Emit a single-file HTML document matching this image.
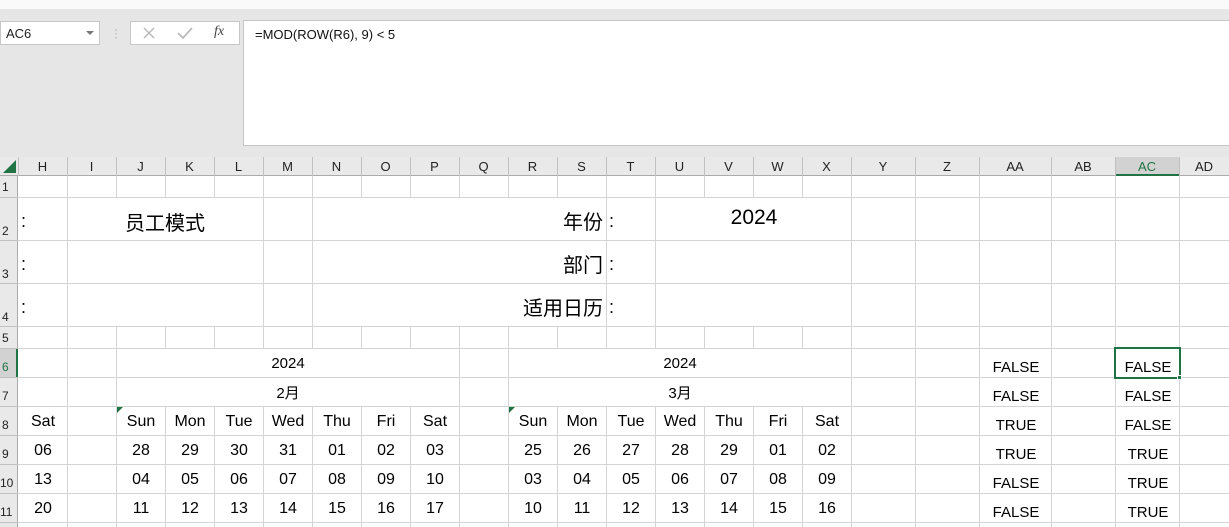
<!DOCTYPE html>
<html><head><meta charset="utf-8"><style>
*{margin:0;padding:0;box-sizing:border-box}
body{width:1229px;height:527px;overflow:hidden;background:#e6e6e6;position:relative;font-family:"Liberation Sans","Noto Sans CJK SC",sans-serif;color:#000}
.a{position:absolute}
.w{position:absolute;background:#fff}
.t{position:absolute;white-space:nowrap;text-align:center;transform:translateX(-50%)}
.ch{position:absolute;top:157px;height:19px;font-size:13px;line-height:19px;text-align:center;color:#222}
.rh{position:absolute;left:0;width:18px;font-size:12px;color:#222;padding-left:2px}
.d{position:absolute;left:0;top:2px;font-size:16px}
</style></head><body>
<div class="a" style="left:0;top:0;width:1229px;height:9px;background:#fafafa"></div>
<div class="w" style="left:0;top:21px;width:100px;height:24px;border:1px solid #c6c6c6"></div>
<div class="a" style="left:6px;top:26px;font-size:13px;color:#222">AC6</div>
<div class="a" style="left:86px;top:31px;width:0;height:0;border-left:4px solid transparent;border-right:4px solid transparent;border-top:4px solid #777"></div>
<div class="a" style="left:114px;top:27px;font-size:12px;color:#aaa;line-height:4px">·<br>·<br>·</div>
<div class="w" style="left:130px;top:21px;width:110px;height:24px;border:1px solid #c6c6c6"></div>
<svg class="a" style="left:130px;top:21px" width="110" height="24">
<path d="M14 7L24 17M24 7L14 17" stroke="#bbb" stroke-width="1.5"/>
<path d="M48 12L53 17L62 7" stroke="#bbb" stroke-width="1.8" fill="none"/>
</svg>
<div class="a" style="left:214px;top:24px;font-size:14px;color:#444;font-style:italic;font-family:'Liberation Serif',serif">fx</div>
<div class="w" style="left:243px;top:20px;width:986px;height:126px;border:1px solid #c6c6c6;border-right:none"></div>
<div class="a" style="left:255px;top:27px;font-size:13px;color:#111">=MOD(ROW(R6), 9) &lt; 5</div>

<div class="w" style="left:0;top:176px;width:1229px;height:351px"></div>
<div class="a" style="left:0;top:157px;width:1229px;height:19px;background:#e9e9e9;border-bottom:1px solid #ababab"></div>
<div class="a" style="left:0;top:176px;width:18px;height:351px;background:#e9e9e9;border-right:1px solid #ababab"></div>
<div class="a" style="left:1115px;top:157px;width:64px;height:19px;background:#d2d2d2;border-bottom:2px solid #217346"></div>
<div class="a" style="left:0;top:348px;width:18px;height:29px;background:#d2d2d2;border-right:2px solid #217346"></div>
<svg class="a" style="left:0;top:157px" width="18" height="19"><path d="M3 16 L16 16 L16 3 Z" fill="#217346"/></svg>

<svg class="a" style="left:0;top:0" width="1229" height="527">
<g stroke="#d4d4d4" stroke-width="1" shape-rendering="crispEdges">
<path d="M67.5 176V527M116.5 176V527M165.5 176V527M214.5 176V527M263.5 176V527M312.5 176V527M361.5 176V527M410.5 176V527M459.5 176V527M508.5 176V527M557.5 176V527M606.5 176V527M655.5 176V527M704.5 176V527M753.5 176V527M802.5 176V527M851.5 176V527M915.5 176V527M979.5 176V527M1051.5 176V527M1115.5 176V527M1179.5 176V527"/>
<path d="M18 197.5H1229M18 240.5H1229M18 283.5H1229M18 326.5H1229M18 348.5H1229M18 377.5H1229M18 406.5H1229M18 435.5H1229M18 464.5H1229M18 493.5H1229M18 522.5H1229"/>
</g>
<g stroke="#c0c0c0" shape-rendering="crispEdges"><path d="M18.5 157V176M67.5 157V176M116.5 157V176M165.5 157V176M214.5 157V176M263.5 157V176M312.5 157V176M361.5 157V176M410.5 157V176M459.5 157V176M508.5 157V176M557.5 157V176M606.5 157V176M655.5 157V176M704.5 157V176M753.5 157V176M802.5 157V176M851.5 157V176M915.5 157V176M979.5 157V176M1051.5 157V176M1115.5 157V176M1179.5 157V176"/>
<path d="M0 197.5H18M0 240.5H18M0 283.5H18M0 326.5H18M0 348.5H18M0 377.5H18M0 406.5H18M0 435.5H18M0 464.5H18M0 493.5H18M0 522.5H18"/></g>
</svg>
<div class="w" style="left:68px;top:198px;width:195px;height:42px"></div>
<div class="w" style="left:68px;top:241px;width:195px;height:42px"></div>
<div class="w" style="left:68px;top:284px;width:195px;height:42px"></div>
<div class="w" style="left:313px;top:198px;width:293px;height:128px"></div>
<div class="a" style="left:312px;top:240px;width:294px;height:1px;background:#d4d4d4"></div>
<div class="a" style="left:312px;top:283px;width:294px;height:1px;background:#d4d4d4"></div>
<div class="w" style="left:656px;top:198px;width:195px;height:42px"></div>
<div class="w" style="left:656px;top:241px;width:195px;height:42px"></div>
<div class="w" style="left:656px;top:284px;width:195px;height:42px"></div>
<div class="w" style="left:117px;top:349px;width:342px;height:28px"></div>
<div class="w" style="left:117px;top:378px;width:342px;height:28px"></div>
<div class="w" style="left:509px;top:349px;width:342px;height:28px"></div>
<div class="w" style="left:509px;top:378px;width:342px;height:28px"></div>

<div class="ch" style="left:18px;width:49px">H</div><div class="ch" style="left:67px;width:49px">I</div><div class="ch" style="left:116px;width:49px">J</div><div class="ch" style="left:165px;width:49px">K</div><div class="ch" style="left:214px;width:49px">L</div><div class="ch" style="left:263px;width:49px">M</div><div class="ch" style="left:312px;width:49px">N</div><div class="ch" style="left:361px;width:49px">O</div><div class="ch" style="left:410px;width:49px">P</div><div class="ch" style="left:459px;width:49px">Q</div><div class="ch" style="left:508px;width:49px">R</div><div class="ch" style="left:557px;width:49px">S</div><div class="ch" style="left:606px;width:49px">T</div><div class="ch" style="left:655px;width:49px">U</div><div class="ch" style="left:704px;width:49px">V</div><div class="ch" style="left:753px;width:49px">W</div><div class="ch" style="left:802px;width:49px">X</div><div class="ch" style="left:851px;width:64px">Y</div><div class="ch" style="left:915px;width:64px">Z</div><div class="ch" style="left:979px;width:72px">AA</div><div class="ch" style="left:1051px;width:64px">AB</div><div class="ch" style="left:1115px;width:64px;color:#217346">AC</div><div class="ch" style="left:1179px;width:50px">AD</div>
<div class="rh" style="top:180px">1</div><div class="rh" style="top:224px">2</div><div class="rh" style="top:267px">3</div><div class="rh" style="top:310px">4</div><div class="rh" style="top:331px">5</div><div class="rh" style="top:360px;color:#217346">6</div><div class="rh" style="top:389px">7</div><div class="rh" style="top:418px">8</div><div class="rh" style="top:447px">9</div><div class="rh" style="top:476px;padding-left:0">10</div><div class="rh" style="top:505px;padding-left:0">11</div>

<div class="a" style="left:21px;top:211px;font-size:18px">:</div>
<div class="a" style="left:21px;top:254px;font-size:18px">:</div>
<div class="a" style="left:21px;top:297px;font-size:18px">:</div>
<div class="t" style="left:165px;top:207px;font-size:20px">员工模式</div>
<div class="a" style="left:312px;width:291px;top:206px;font-size:20px;text-align:right">年份</div>
<div class="a" style="left:312px;width:291px;top:249px;font-size:20px;text-align:right">部门</div>
<div class="a" style="left:312px;width:291px;top:292px;font-size:20px;text-align:right">适用日历</div>
<div class="a" style="left:609px;top:211px;font-size:18px">:</div>
<div class="a" style="left:609px;top:254px;font-size:18px">:</div>
<div class="a" style="left:609px;top:297px;font-size:18px">:</div>
<div class="t" style="left:754px;top:206px;font-size:21px">2024</div>

<div class="t" style="left:288px;top:355px;font-size:15px">2024</div>
<div class="t" style="left:288px;top:382px;font-size:15px">2月</div>
<div class="t" style="left:680px;top:355px;font-size:15px">2024</div>
<div class="t" style="left:680px;top:382px;font-size:15px">3月</div>
<svg class="a" style="left:117px;top:407px" width="6" height="6"><path d="M0 0H6L0 6Z" fill="#217346"/></svg>
<svg class="a" style="left:509px;top:407px" width="6" height="6"><path d="M0 0H6L0 6Z" fill="#217346"/></svg>

<div class="d">
<div class="t" style="left:43px;top:411px">Sat</div>
<div class="t" style="left:141px;top:411px">Sun</div><div class="t" style="left:190px;top:411px">Mon</div><div class="t" style="left:239px;top:411px">Tue</div><div class="t" style="left:288px;top:411px">Wed</div><div class="t" style="left:337px;top:411px">Thu</div><div class="t" style="left:386px;top:411px">Fri</div><div class="t" style="left:435px;top:411px">Sat</div>
<div class="t" style="left:533px;top:411px">Sun</div><div class="t" style="left:582px;top:411px">Mon</div><div class="t" style="left:631px;top:411px">Tue</div><div class="t" style="left:680px;top:411px">Wed</div><div class="t" style="left:729px;top:411px">Thu</div><div class="t" style="left:778px;top:411px">Fri</div><div class="t" style="left:827px;top:411px">Sat</div>

<div class="t" style="left:43px;top:440px">06</div>
<div class="t" style="left:141px;top:440px">28</div><div class="t" style="left:190px;top:440px">29</div><div class="t" style="left:239px;top:440px">30</div><div class="t" style="left:288px;top:440px">31</div><div class="t" style="left:337px;top:440px">01</div><div class="t" style="left:386px;top:440px">02</div><div class="t" style="left:435px;top:440px">03</div>
<div class="t" style="left:533px;top:440px">25</div><div class="t" style="left:582px;top:440px">26</div><div class="t" style="left:631px;top:440px">27</div><div class="t" style="left:680px;top:440px">28</div><div class="t" style="left:729px;top:440px">29</div><div class="t" style="left:778px;top:440px">01</div><div class="t" style="left:827px;top:440px">02</div>

<div class="t" style="left:43px;top:469px">13</div>
<div class="t" style="left:141px;top:469px">04</div><div class="t" style="left:190px;top:469px">05</div><div class="t" style="left:239px;top:469px">06</div><div class="t" style="left:288px;top:469px">07</div><div class="t" style="left:337px;top:469px">08</div><div class="t" style="left:386px;top:469px">09</div><div class="t" style="left:435px;top:469px">10</div>
<div class="t" style="left:533px;top:469px">03</div><div class="t" style="left:582px;top:469px">04</div><div class="t" style="left:631px;top:469px">05</div><div class="t" style="left:680px;top:469px">06</div><div class="t" style="left:729px;top:469px">07</div><div class="t" style="left:778px;top:469px">08</div><div class="t" style="left:827px;top:469px">09</div>

<div class="t" style="left:43px;top:498px">20</div>
<div class="t" style="left:141px;top:498px">11</div><div class="t" style="left:190px;top:498px">12</div><div class="t" style="left:239px;top:498px">13</div><div class="t" style="left:288px;top:498px">14</div><div class="t" style="left:337px;top:498px">15</div><div class="t" style="left:386px;top:498px">16</div><div class="t" style="left:435px;top:498px">17</div>
<div class="t" style="left:533px;top:498px">10</div><div class="t" style="left:582px;top:498px">11</div><div class="t" style="left:631px;top:498px">12</div><div class="t" style="left:680px;top:498px">13</div><div class="t" style="left:729px;top:498px">14</div><div class="t" style="left:778px;top:498px">15</div><div class="t" style="left:827px;top:498px">16</div>
</div>

<div style="position:absolute;left:0;top:1px;font-size:15px">
<div class="t" style="left:1016px;top:358px">FALSE</div><div class="t" style="left:1016px;top:387px">FALSE</div><div class="t" style="left:1016px;top:416px">TRUE</div><div class="t" style="left:1016px;top:445px">TRUE</div><div class="t" style="left:1016px;top:474px">FALSE</div><div class="t" style="left:1016px;top:503px">FALSE</div>
<div class="t" style="left:1148px;top:358px">FALSE</div><div class="t" style="left:1148px;top:387px">FALSE</div><div class="t" style="left:1148px;top:416px">FALSE</div><div class="t" style="left:1148px;top:445px">TRUE</div><div class="t" style="left:1148px;top:474px">TRUE</div><div class="t" style="left:1148px;top:503px">TRUE</div>
</div>
<div class="a" style="left:1114px;top:347px;width:67px;height:32px;border:2px solid #217346"></div>
<div class="a" style="left:1177px;top:375px;width:5px;height:5px;background:#217346;border:1px solid #fff"></div>
</body></html>
